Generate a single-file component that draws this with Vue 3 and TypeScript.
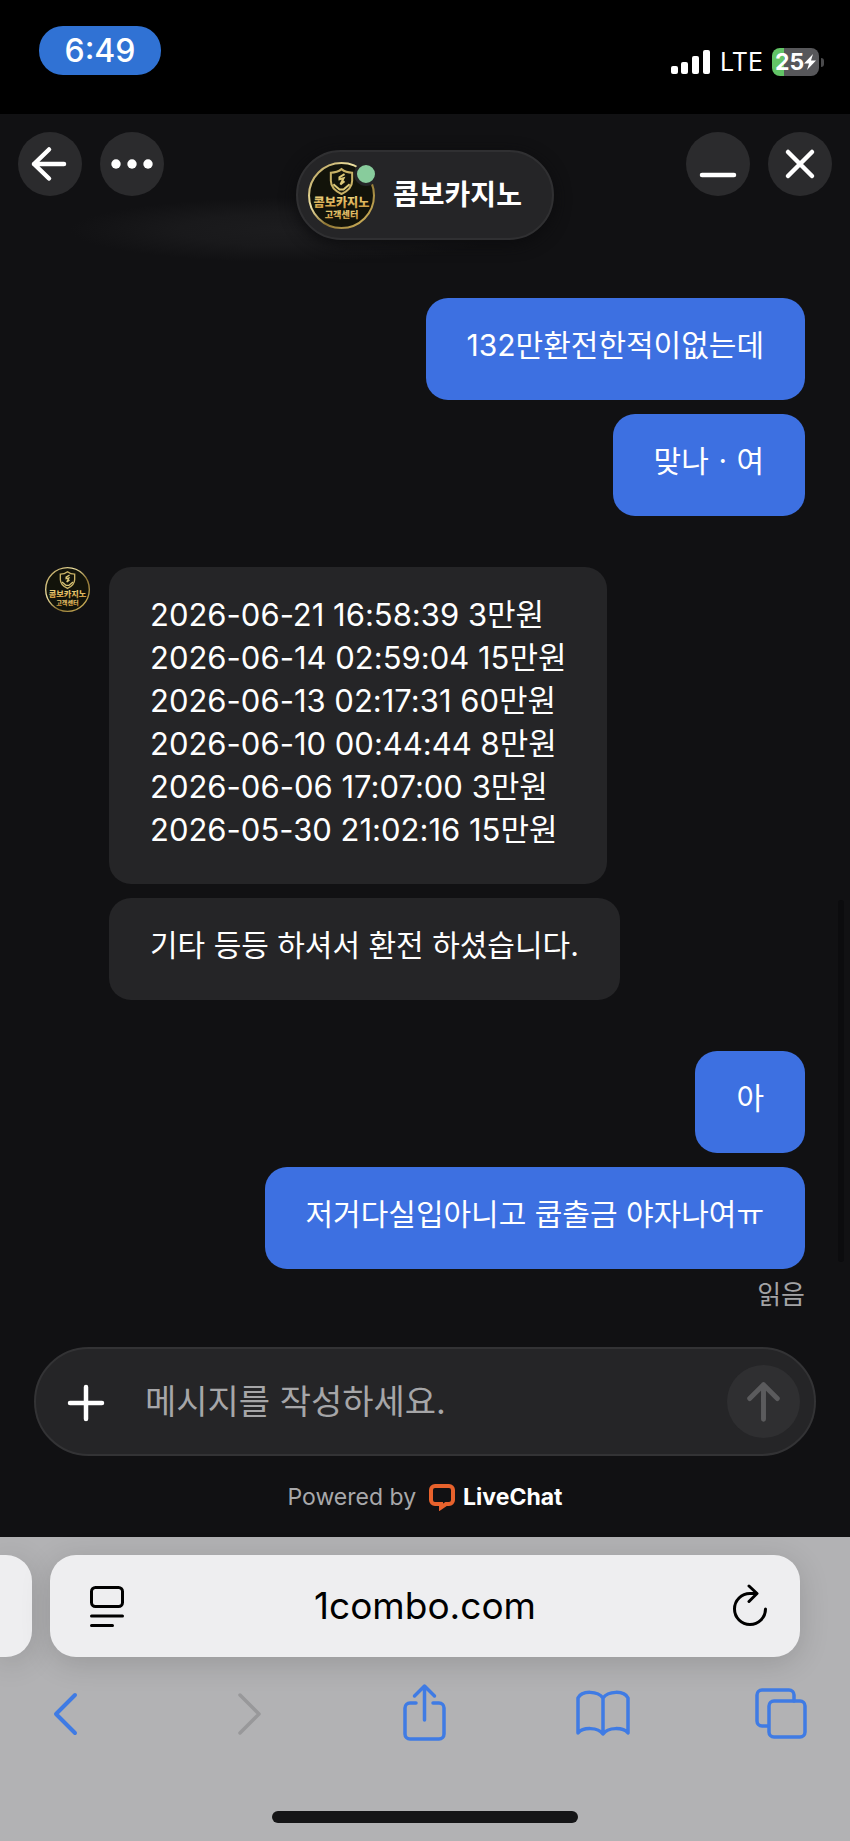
<script setup lang="ts">
import { ref } from 'vue'

interface MessageGroup {
  id: number
  from: 'visitor' | 'operator'
  messages: string[][]
  status?: string
}

const agentName = '콤보카지노'
const draft = ref('')
const address = ref('1combo.com')

const groups: MessageGroup[] = [
  { id: 1, from: 'visitor', messages: [['132만환전한적이없는데'], ['맞나ㆍ여']] },
  {
    id: 2,
    from: 'operator',
    messages: [
      [
        '2026-06-21 16:58:39 3만원',
        '2026-06-14 02:59:04 15만원',
        '2026-06-13 02:17:31 60만원',
        '2026-06-10 00:44:44 8만원',
        '2026-06-06 17:07:00 3만원',
        '2026-05-30 21:02:16 15만원',
      ],
      ['기타 등등 하셔서 환전 하셨습니다.'],
    ],
  },
  { id: 3, from: 'visitor', messages: [['아'], ['저거다실입아니고 쿱출금 야자나여ㅠ']], status: '읽음' },
]
</script>

<template>
  <div class="screen">
    <svg class="defs" width="0" height="0" aria-hidden="true">
      <defs>
        <linearGradient id="gold" x1="0" y1="0" x2="0" y2="1">
          <stop offset="0" stop-color="#f3e08c" />
          <stop offset="1" stop-color="#c98f35" />
        </linearGradient>
        <linearGradient id="ring" x1="0" y1="0" x2="1" y2="1">
          <stop offset="0" stop-color="#a9904a" />
          <stop offset="0.35" stop-color="#f0e3a4" />
          <stop offset="0.6" stop-color="#8d7433" />
          <stop offset="1" stop-color="#e0c265" />
        </linearGradient>
        <symbol id="logo" viewBox="0 0 66 66">
          <circle cx="33" cy="33" r="32" fill="#12130a" />
          <circle cx="33" cy="33" r="32" fill="none" stroke="url(#ring)" stroke-width="2" />
          <path d="M33 7c3 2.500 7 3.500 10.500 3.500v8c0 6-4 10-10.500 13-6.500-3-10.500-7-10.500-13v-8c3.500 0 7.500-1 10.500-3.500z" fill="none" stroke="#c9b266" stroke-width="2" />
          <path d="M36 12l-5 3v2l4-1-3 6 4-3M25 22l6 5h4l6-5" fill="none" stroke="#dcc878" stroke-width="2" />
          <text x="33" y="44" class="logo-name">콤보카지노</text>
          <text x="33" y="55" class="logo-sub">고객센터</text>
        </symbol>
      </defs>
    </svg>

    <div class="status-bar">
      <span class="clock">6:49</span>
      <div class="status-right">
        <svg width="39" height="25" viewBox="0 0 39 25" fill="#fff" aria-label="신호">
          <rect x="0" y="16" width="7" height="8" rx="2" />
          <rect x="10" y="12" width="7" height="12" rx="2" />
          <rect x="21" y="6" width="7" height="18" rx="2" />
          <rect x="32" y="0" width="7" height="24" rx="2" />
        </svg>
        <span class="network">LTE</span>
        <span class="battery">
          <span class="battery-level">25</span>
          <svg width="12" height="18" viewBox="0 0 12 18" aria-hidden="true">
            <path d="M9 1L0 10.500h5L3 17l9-9.500H7z" fill="#fff" />
          </svg>
        </span>
        <span class="battery-tip"></span>
      </div>
    </div>

    <main class="chat">
      <header class="chat-header">
        <div class="actions">
          <button class="round" type="button" aria-label="뒤로">
            <svg width="64" height="64" viewBox="0 0 64 64" class="stroke">
              <path d="M46 32H16M31 17.500L16 32l15 14.500" />
            </svg>
          </button>
          <button class="round" type="button" aria-label="더보기">
            <svg width="64" height="64" viewBox="0 0 64 64" fill="#fff">
              <circle cx="16" cy="32" r="4.700" /><circle cx="32" cy="32" r="4.700" /><circle cx="48" cy="32" r="4.700" />
            </svg>
          </button>
        </div>
        <div class="agent">
          <span class="agent-avatar">
            <svg width="67" height="67" aria-hidden="true"><use href="#logo" /></svg>
            <span class="online"></span>
          </span>
          <h1>{{ agentName }}</h1>
        </div>
        <div class="actions end">
          <button class="round" type="button" aria-label="최소화">
            <svg width="64" height="64" viewBox="0 0 64 64" class="stroke"><path d="M16 43h32" /></svg>
          </button>
          <button class="round" type="button" aria-label="닫기">
            <svg width="64" height="64" viewBox="0 0 64 64" class="stroke"><path d="M20 20l24 24M44 20L20 44" /></svg>
          </button>
        </div>
      </header>

      <section class="thread" aria-label="대화">
        <div v-for="group in groups" :key="group.id" class="group" :class="group.from">
          <svg v-if="group.from === 'operator'" class="small-avatar" width="45" height="45" aria-hidden="true">
            <use href="#logo" />
          </svg>
          <div class="bubbles">
            <div
              v-for="(message, index) in group.messages"
              :key="index"
              class="bubble"
              :class="{ records: message.length > 1 }"
            >
              <p v-for="line in message" :key="line">{{ line }}</p>
            </div>
            <span v-if="group.status" class="read">{{ group.status }}</span>
          </div>
        </div>
        <span class="scroll-thumb"></span>
      </section>

      <form class="composer" @submit.prevent>
        <button class="attach" type="button" aria-label="첨부">
          <svg width="40" height="40" viewBox="0 0 40 40" class="stroke"><path d="M4 21h32M20 5v32" /></svg>
        </button>
        <input v-model="draft" type="text" placeholder="메시지를 작성하세요." aria-label="메시지를 작성하세요." />
        <button class="send" type="submit" aria-label="보내기">
          <svg width="73" height="73" viewBox="0 0 74 74"><path d="M37 55V20M23 34l14-14 14 14" /></svg>
        </button>
      </form>

      <a class="powered" href="#">
        <span>Powered by</span>
        <svg width="28" height="28" viewBox="0 0 28 28" aria-hidden="true">
          <path d="M7 3h14a4 4 0 0 1 4 4v10a4 4 0 0 1-4 4h-3l-5 3.500V21H7a4 4 0 0 1-4-4V7a4 4 0 0 1 4-4z" fill="none" stroke="#e8622c" stroke-width="4" />
        </svg>
        <strong>LiveChat</strong>
      </a>
    </main>

    <footer class="browser">
      <div class="tabs">
        <span class="tab-previous"></span>
        <div class="tab-current">
          <button type="button" aria-label="페이지 메뉴">
            <svg width="36" height="44" viewBox="0 0 36 44" fill="none" stroke="#000" stroke-width="3" stroke-linecap="round">
              <rect x="2.500" y="3.500" width="31" height="19" rx="4" /><path d="M2.500 32h31M2.500 41.500h21" />
            </svg>
          </button>
          <input v-model="address" type="text" aria-label="주소" />
          <button type="button" aria-label="새로고침">
            <svg width="36" height="44" viewBox="0 0 36 44" fill="none" stroke="#000" stroke-width="3" stroke-linecap="round" stroke-linejoin="round">
              <path d="M24 9.500H18A15.500 15.500 0 1 0 33.500 25M17 2l8 7.500-8 8" />
            </svg>
          </button>
        </div>
      </div>
      <nav class="toolbar" aria-label="브라우저">
        <button type="button" aria-label="이전">
          <svg width="56" height="60" viewBox="0 0 56 60"><path d="M38 12L19 31l19 19" stroke-width="4" /></svg>
        </button>
        <button class="disabled" type="button" aria-label="다음" disabled>
          <svg width="56" height="60" viewBox="0 0 56 60"><path d="M24 12l19 19-19 19" /></svg>
        </button>
        <button type="button" aria-label="공유">
          <svg width="56" height="60" viewBox="0 0 56 60">
            <path d="M21 20h-6a5 5 0 0 0-5 5v26a5 5 0 0 0 5 5h29a5 5 0 0 0 5-5V25a5 5 0 0 0-5-5h-6M29.500 37V4M19.500 13l10-10 10 10" />
          </svg>
        </button>
        <button type="button" aria-label="책갈피">
          <svg width="56" height="60" viewBox="0 0 56 60">
            <path d="M29 15C24 8 8 7 4 15v35c5-6 20-6 25 1 5-7 20-7 25-1V15C50 7 34 8 29 15zM29 15v36" />
          </svg>
        </button>
        <button type="button" aria-label="탭">
          <svg width="56" height="60" viewBox="0 0 56 60">
            <path d="M15 43H9a5 5 0 0 1-5-5V12a5 5 0 0 1 5-5h27a5 5 0 0 1 5 5v6" />
            <rect x="16" y="18" width="36" height="36" rx="5" />
          </svg>
        </button>
      </nav>
      <span class="home"></span>
    </footer>
  </div>
</template>

<style>
body {
  margin: 0;
  background: #111113;
}
</style>

<style scoped>
.screen {
  display: flex;
  flex-direction: column;
  min-height: 100vh;
  color: #fff;
  background: #111113;
  font-family: Inter, 'Noto Sans CJK KR', sans-serif;
}
.defs {
  position: absolute;
}
.logo-name,
.logo-sub {
  fill: url(#gold);
  font-family: 'Noto Sans CJK KR', sans-serif;
  font-weight: 900;
  text-anchor: middle;
}
.logo-name {
  font-size: 12px;
}
.logo-sub {
  font-size: 9px;
}
button {
  display: flex;
  padding: 0;
  border: 0;
  background: none;
}
input {
  flex: 1;
  min-width: 0;
  padding: 0;
  border: 0;
  outline: 0;
  background: none;
  font-family: inherit;
}
.stroke {
  fill: none;
  stroke: #fff;
  stroke-width: 4.5;
  stroke-linecap: round;
  stroke-linejoin: round;
}
.status-bar {
  display: flex;
  justify-content: space-between;
  align-items: flex-start;
  height: 88px;
  padding: 26px 26px 0 39px;
  background: #000;
}
.clock {
  width: 122px;
  border-radius: 24px;
  background: #3072d4;
  font-size: 32px;
  font-weight: 500;
  line-height: 49px;
  text-align: center;
}
.status-right {
  display: flex;
  align-items: center;
  margin-top: 22px;
}
.network {
  margin: 0 9px 0 10px;
  font-size: 25px;
  line-height: 28px;
}
.battery {
  display: flex;
  align-items: center;
  justify-content: center;
  width: 47px;
  height: 28px;
  border-radius: 8px;
  background: linear-gradient(90deg, #62c466 25%, #57575a 25%);
}
.battery-level {
  font-size: 23px;
  font-weight: 700;
  line-height: 28px;
}
.battery-tip {
  width: 3px;
  height: 9px;
  margin-left: 2px;
  border-radius: 0 4px 4px 0;
  background: #4a4a4c;
}
.chat {
  display: flex;
  flex: 1;
  flex-direction: column;
}
.chat-header {
  display: grid;
  grid-template-columns: 1fr auto 1fr;
  align-items: start;
  padding: 18px 18px 58px;
  background: radial-gradient(ellipse 220px 32px at 290px 116px, #1c1c1e, #19191b 50%, #111113);
}
.actions {
  display: flex;
  gap: 18px;
}
.actions.end {
  justify-content: flex-end;
}
.round {
  border-radius: 50%;
  background: #2b2b2d;
}
.agent {
  display: flex;
  align-items: center;
  gap: 18px;
  box-sizing: border-box;
  height: 90px;
  margin-top: 18px;
  padding: 0 30px 0 10px;
  border: 2px solid #303032;
  border-radius: 45px;
  background: #252527;
  box-shadow: 0 4px 16px #0c0c0e;
}
.agent-avatar {
  position: relative;
  display: flex;
}
.online {
  position: absolute;
  top: 0;
  right: -3px;
  width: 18px;
  height: 18px;
  border: 3px solid #252527;
  border-radius: 50%;
  background: #88cc9c;
}
h1 {
  margin: 0;
  font-size: 28px;
  font-weight: 700;
  line-height: 40px;
}
.thread {
  position: relative;
  display: flex;
  flex: 1;
  flex-direction: column;
  gap: 51px;
  padding: 0 45px;
}
.group {
  display: flex;
  gap: 19px;
}
.visitor {
  justify-content: flex-end;
}
.small-avatar {
  flex: none;
}
.bubbles {
  display: flex;
  flex-direction: column;
  align-items: flex-start;
  gap: 14px;
}
.visitor .bubbles {
  align-items: flex-end;
}
.bubble {
  padding: 26px 41px 33px;
  border-radius: 22px;
  background: #252527;
  font-size: 30px;
}
.bubble.records {
  font-size: 31px;
}
.visitor .bubble {
  background: #3d70e1;
}
.bubble p {
  margin: 0;
  line-height: 43px;
}
.read {
  color: #a3a3a5;
  font-size: 26px;
  line-height: 24px;
}
.scroll-thumb {
  position: absolute;
  top: 602px;
  right: 6px;
  width: 6px;
  height: 362px;
  border-radius: 3px;
  background: #0c0c0e;
}
.composer {
  display: flex;
  align-items: center;
  box-sizing: border-box;
  height: 109px;
  margin: 0 34px;
  padding: 0 14px 0 30px;
  border: 2px solid #333335;
  border-radius: 55px;
  background: #252527;
}
.composer input {
  margin-left: 39px;
  color: #fff;
  font-size: 34px;
  line-height: 50px;
}
.composer input::placeholder {
  color: #a6a6a8;
  opacity: 1;
}
.send {
  border-radius: 50%;
  background: #2f2f31;
}
.send path {
  fill: none;
  stroke: #5b5b5d;
  stroke-width: 5;
  stroke-linecap: round;
  stroke-linejoin: round;
}
.powered {
  display: flex;
  align-items: center;
  justify-content: center;
  height: 81px;
  color: #a8a8aa;
  font-size: 23px;
  text-decoration: none;
}
.powered svg {
  margin: 0 7px 0 12px;
}
.powered strong {
  color: #fff;
  font-weight: 700;
}
.browser {
  display: flex;
  flex-direction: column;
  padding: 18px 0;
  background: #b2b2b4;
}
.tabs {
  display: flex;
  gap: 18px;
  height: 102px;
  padding-right: 50px;
}
.tab-previous {
  width: 32px;
  border-radius: 0 26px 26px 0;
  background: #eeeef0;
  box-shadow: 0 6px 30px rgb(0 0 0 / 15%);
}
.tab-current {
  display: flex;
  flex: 1;
  align-items: center;
  justify-content: space-between;
  padding: 0 32px 0 39px;
  border-radius: 26px;
  background: #eeeef0;
  box-shadow: 0 6px 30px rgb(0 0 0 / 15%);
}
.tab-current input {
  padding-right: 7px;
  color: #000;
  font-size: 37px;
  line-height: 50px;
  text-align: center;
}
.toolbar {
  display: flex;
  justify-content: space-between;
  margin-top: 26px;
  padding: 0 41px 0 37px;
}
.toolbar svg {
  fill: none;
  stroke: #3f7be4;
  stroke-width: 3.5;
  stroke-linecap: round;
  stroke-linejoin: round;
}
.toolbar .disabled svg {
  stroke: #98989a;
}
.home {
  align-self: center;
  width: 36%;
  height: 12px;
  margin-top: 68px;
  border-radius: 6px;
  background: #151517;
}
</style>
